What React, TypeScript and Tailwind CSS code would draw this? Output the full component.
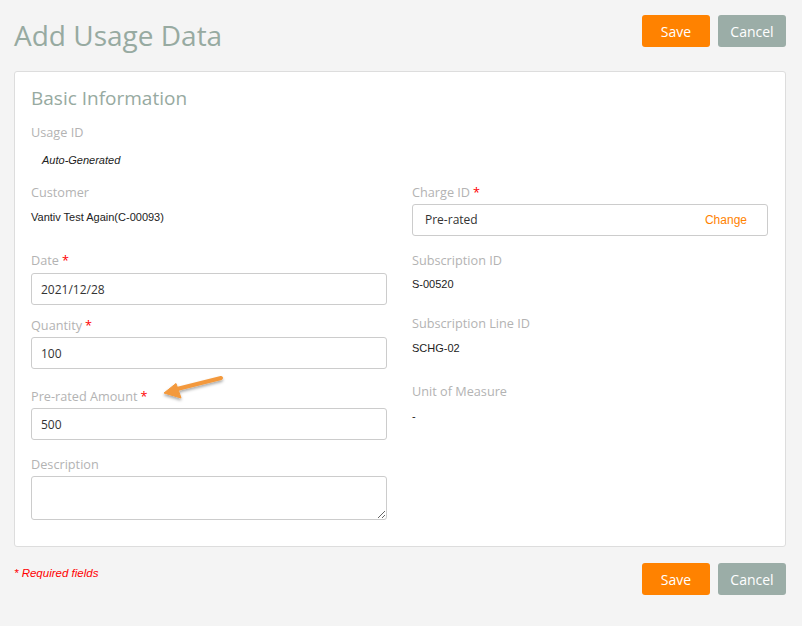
import React from 'react';

const sans = 'font-["Open_Sans",sans-serif]';
const arial = 'font-["Liberation_Sans",Arial,sans-serif]';

function Label({ text, required = false, className = '' }: { text: string; required?: boolean; className?: string }) {
  return (
    <div className={`${sans} text-[12.7px] leading-[18px] text-[#b3b3b3] ${className}`}>
      {text}
      {required && <span className="ml-[3px] text-[#ff0000]">*</span>}
    </div>
  );
}

function Value({ text, className = '' }: { text: string; className?: string }) {
  return <div className={`${arial} text-[11px] leading-[16px] text-[#222] ${className}`}>{text}</div>;
}

function TextInput({ value, className = '' }: { value: string; className?: string }) {
  return (
    <input
      readOnly
      defaultValue={value}
      className={`${sans} block h-[32px] w-full rounded-[3px] border border-[#cccccc] bg-white pl-[9px] text-[12px] text-[#333] outline-none ${className}`}
    />
  );
}

function Buttons() {
  return (
    <div className="flex gap-2">
      <button className={`${sans} h-[32px] w-[68px] rounded-[3px] bg-[#ff8200] text-[14px] text-white`}>Save</button>
      <button className={`${sans} h-[32px] w-[68px] rounded-[3px] bg-[#9bada7] text-[14px] text-white`}>Cancel</button>
    </div>
  );
}

export default function App() {
  return (
    <div className="relative min-h-[626px] w-full bg-[#f4f4f4] px-[14px] pt-[15px]">
      {/* Header */}
      <div className="flex items-start justify-between pr-[2px]">
        <h1 className={`${sans} pt-[1px] text-[28px] leading-[39px] text-[#97aaa1]`}>Add Usage Data</h1>
        <Buttons />
      </div>

      {/* Card */}
      <div className="mt-[16px] mr-[2px] rounded-[3px] border border-[#dddddd] bg-white pl-[16px] pr-[17px] pt-[12px] pb-[26px]">
        <h2 className={`${sans} text-[19px] leading-[28px] text-[#97aaa1]`}>Basic Information</h2>

        <div className="grid grid-cols-2 gap-x-[25px]">
          {/* Left column */}
          <div className="flex flex-col">
            <Label text="Usage ID" className="mt-[11px]" />
            <div className={`${arial} mt-[11px] pl-[11px] text-[11px] italic leading-[16px] text-[#222]`}>Auto-Generated</div>

            <Label text="Customer" className="mt-[15px]" />
            <Value text="Vantiv Test Again(C-00093)" className="mt-[8px]" />

            <Label text="Date" required className="mt-[26px]" />
            <TextInput value="2021/12/28" className="mt-[4px]" />

            <Label text="Quantity" required className="mt-[11px]" />
            <TextInput value="100" className="mt-[3px]" />

            <Label text="Pre-rated Amount" required className="mt-[18px]" />
            <TextInput value="500" className="mt-[3px]" />

            <Label text="Description" className="mt-[15px]" />
            <textarea
              readOnly
              className={`${sans} mt-[3px] block h-[44px] w-full rounded-[3px] border border-[#cccccc] bg-white text-[12px] outline-none`}
            />
          </div>

          {/* Right column */}
          <div className="flex flex-col">
            <Label text="Charge ID" required className="mt-[71px]" />
            <div className="mt-[3px] flex h-[32px] items-center justify-between rounded-[3px] border border-[#cccccc] bg-white pl-[12px] pr-[20px]">
              <span className={`${sans} text-[12px] text-[#333]`}>Pre-rated</span>
              <span className={`${arial} text-[12px] text-[#ff8200]`}>Change</span>
            </div>

            <Label text="Subscription ID" className="mt-[15px]" />
            <Value text="S-00520" className="mt-[7px]" />

            <Label text="Subscription Line ID" className="mt-[22px]" />
            <Value text="SCHG-02" className="mt-[8px]" />

            <Label text="Unit of Measure" className="mt-[26px]" />
            <Value text="-" className="mt-[8px]" />
          </div>
        </div>
      </div>

      {/* Footer */}
      <div className="mt-[16px] flex items-start justify-between pr-[2px]">
        <div className={`${arial} mt-[2px] text-[11.5px] italic leading-[16px] text-[#ff0000]`}>* Required fields</div>
        <Buttons />
      </div>

      {/* Annotation arrow */}
      <svg className="absolute left-[155px] top-[370px]" width="75" height="36" viewBox="0 0 75 36">
        <defs>
          <filter id="arrowShadow" x="-20%" y="-40%" width="140%" height="200%">
            <feDropShadow dx="0" dy="2" stdDeviation="1.5" floodColor="#000" floodOpacity="0.35" />
          </filter>
        </defs>
        <g filter="url(#arrowShadow)" fill="#f3993c" stroke="#f3993c">
          <line x1="66" y1="8" x2="22" y2="19" strokeWidth="4" strokeLinecap="round" />
          <polygon points="9,23 21,13.5 26,28" strokeWidth="1" strokeLinejoin="round" />
        </g>
      </svg>
    </div>
  );
}
